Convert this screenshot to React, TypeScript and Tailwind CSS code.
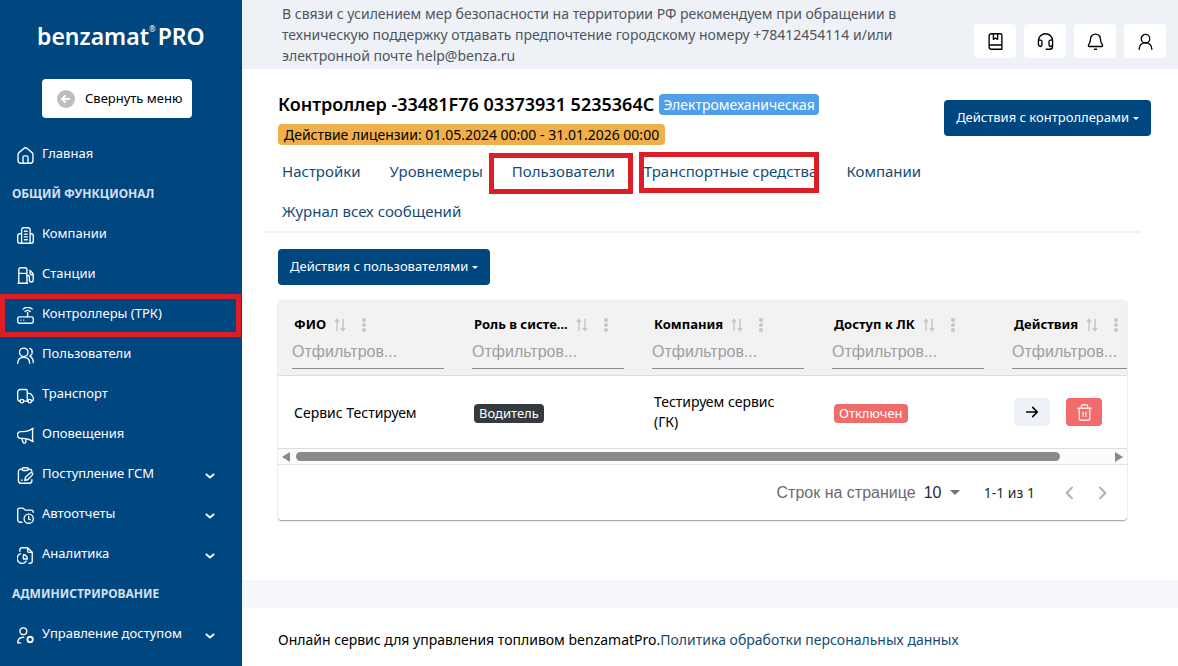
import type { ReactNode } from 'react';

// ============================================
// Icons
// ============================================

interface IconProps {
  children: ReactNode;
  className?: string;
}

function Icon({ children, className = 'size-4' }: IconProps) {
  return (
    <svg
      viewBox="0 0 24 24"
      fill="none"
      stroke="currentColor"
      strokeWidth="1.9"
      strokeLinecap="round"
      strokeLinejoin="round"
      className={`shrink-0 ${className}`}
      aria-hidden="true"
    >
      {children}
    </svg>
  );
}

const icons = {
  home: (
    <>
      <path d="M1.5 11c0-1.4.5-2.5 1.6-3.4L9.6 2c1.4-1.2 3.4-1.2 4.8 0l6.5 5.6c1.1.9 1.6 2 1.6 3.4v8.5a3.5 3.5 0 0 1-3.5 3.5H5a3.5 3.5 0 0 1-3.5-3.5z" />
      <path d="M8.5 23v-8.500a2 2 0 0 1 2-2h3a2 2 0 0 1 2 2V23" />
    </>
  ),
  company: (
    <>
      <path d="M6.5 23V4a3 3 0 0 1 3-3h6a3 3 0 0 1 3 3v19M6.5 9.5H4a3 3 0 0 0-3 3V20a3 3 0 0 0 3 3h16a3 3 0 0 0 3-3v-7.5a3 3 0 0 0-3-3h-1.5" />
      <path d="M10.5 6h4M10.5 10h4M10.5 14h4M10.5 18h4" />
    </>
  ),
  station: (
    <>
      <path d="M2.5 23V4a3 3 0 0 1 3-3H11a3 3 0 0 1 3 3v19M1.5 23H15M2.5 9H14" />
      <path d="M14 12h1.5a2 2 0 0 1 2 2v4.5a2.7 2.7 0 0 0 5.4 0V11c0-1.2-.4-2.2-1.2-3L18 4.5M22.5 11h-2a2 2 0 0 1-2-2V5" />
    </>
  ),
  controller: (
    <>
      <rect x="1" y="14" width="22" height="9" rx="2.5" />
      <path d="M15 14V7.5M5.5 18.5h.1M9.5 18.5h.1M11.5 6.500a5 5 0 0 1 7 0M8.500 3a9.500 9.500 0 0 1 13 0" />
    </>
  ),
  users: (
    <>
      <circle cx="9.5" cy="7.5" r="6" />
      <path d="M1 23c.3-5.500 3.500-8.500 8.500-8.500S17.700 17.500 18 23M18 2c2.300.8 3.500 2.800 3.500 5.300S20.300 11.800 18 13c3.300 1.500 5 4.700 5 9" />
    </>
  ),
  transport: (
    <>
      <circle cx="7" cy="20" r="2.5" />
      <circle cx="18" cy="20" r="2.5" />
      <path d="M4.500 20A3.500 3.500 0 0 1 1 16.500V7a3.500 3.500 0 0 1 3.500-3.500H12A2.500 2.500 0 0 1 14.500 6v14M9.500 20h6M14.500 9h3c1 0 1.800.4 2.400 1.200l2.300 3c.5.600.8 1.300.8 2.100V18a2 2 0 0 1-2 2h-.5" />
    </>
  ),
  alerts: (
    <path d="M22 2c-4.500 3.500-9 4.500-14 4.500H5.500a4.500 4.500 0 0 0 0 9.500H8c5 0 9.500 1 14 4.500zM22 2h1M22 20.500h1M6.500 16l2 5.500c.7 2 4 1.600 4-.5V16.500" />
  ),
  supply: (
    <>
      <path d="M7 3H5.500A3.500 3.500 0 0 0 2 6.500v13A3.500 3.500 0 0 0 5.500 23h12a3.500 3.500 0 0 0 3.500-3.500V18M16 3h1.500A3.500 3.500 0 0 1 21 6" />
      <rect x="7" y="1" width="9" height="4" rx="2" />
      <path d="m12 14.500 6.500-6a2 2 0 0 1 3 3L15 18l-4 1zM6 18.500h1.500" />
    </>
  ),
  reports: (
    <>
      <path d="M7 21.500H4.500A3.500 3.500 0 0 1 1 18V4a2.500 2.500 0 0 1 2.500-2.500h4c1 0 1.800.4 2.400 1.200l.8 1c.4.500 1 .8 1.600.8H20A3 3 0 0 1 23 7.500" />
      <circle cx="16.5" cy="16.5" r="6.5" />
      <path d="M16.500 13v4l2.500 1" />
    </>
  ),
  analytics: (
    <>
      <path d="M4 6V4a3 3 0 0 1 3-3h8l6.500 6.500V20a3 3 0 0 1-3 3H17M15 1v4.500a2 2 0 0 0 2 2h4.500" />
      <path d="M5 9.500A7 7 0 1 0 13 20M9 11v6h5.500a5.500 5.500 0 0 0-5.500-6z" />
    </>
  ),
  access: (
    <>
      <circle cx="9" cy="6" r="4.8" />
      <path d="M1 22.500c0-5 2.500-8 8.500-8M5 22.500H1" />
      <circle cx="18.5" cy="17.5" r="3.8" strokeWidth="2.6" />
    </>
  ),
  guide: (
    <>
      <path d="M3 19.500V4a3 3 0 0 1 3-3h13a2 2 0 0 1 2 2v20H6a3 3 0 0 1-3-3v-.500A2.500 2.500 0 0 1 5.500 17H21" />
      <path d="M9 1v8l3-2 3 2V1" />
    </>
  ),
  support: (
    <path d="M5 19a3 3 0 0 1-3-3v-5a10 10 0 0 1 20 0v5a3 3 0 0 1-3 3 2 2 0 0 1-2-2v-5a2 2 0 0 1 2-2h3M5 19a2 2 0 0 0 2-2v-5a2 2 0 0 0-2-2H2M22 16v3a4 4 0 0 1-4 4h-5" />
  ),
  bell: (
    <path d="M12 1.500a7 7 0 0 0-7 7c0 4-1 6-2.700 8.200-.7.900-.2 2.300 1 2.300h17.400c1.200 0 1.700-1.400 1-2.300C20 14.500 19 12.500 19 8.500a7 7 0 0 0-7-7zM10.500 23h3" />
  ),
  profile: (
    <>
      <circle cx="12" cy="8" r="6" />
      <path d="M3 23c.4-5.300 3.700-9 9-9s8.600 3.700 9 9" />
    </>
  ),
};

// ============================================
// Sidebar
// ============================================

interface NavItem {
  label: string;
  icon?: ReactNode;
  expandable?: boolean;
  marked?: boolean;
}

const navItems: NavItem[] = [
  { label: 'Главная', icon: icons.home },
  { label: 'ОБЩИЙ ФУНКЦИОНАЛ' },
  { label: 'Компании', icon: icons.company },
  { label: 'Станции', icon: icons.station },
  { label: 'Контроллеры (ТРК)', icon: icons.controller, marked: true },
  { label: 'Пользователи', icon: icons.users },
  { label: 'Транспорт', icon: icons.transport },
  { label: 'Оповещения', icon: icons.alerts },
  { label: 'Поступление ГСМ', icon: icons.supply, expandable: true },
  { label: 'Автоотчеты', icon: icons.reports, expandable: true },
  { label: 'Аналитика', icon: icons.analytics, expandable: true },
  { label: 'АДМИНИСТРИРОВАНИЕ' },
  { label: 'Управление доступом', icon: icons.access, expandable: true },
];

function Sidebar() {
  return (
    <aside className="w-[242px] shrink-0 bg-[#00467f] text-white">
      <div className="flex pt-5 pl-[37px] text-[23px] leading-8 font-semibold whitespace-nowrap">
        benzamat
        <span className="mr-0.5 text-[8px] leading-[18px] font-normal">®</span>
        PRO
      </div>
      <button
        type="button"
        className="mt-[27px] ml-[42px] flex h-[39px] w-[150px] items-center gap-2.5 rounded bg-white pl-[15px] text-[13px] whitespace-nowrap text-black"
      >
        <svg viewBox="0 0 18 18" className="size-[18px]" aria-hidden="true">
          <circle cx="9" cy="9" r="9" fill="#bdbdbd" />
          <path d="M13 9H5m3.500-3.500L5 9l3.500 3.500" fill="none" stroke="#fff" strokeWidth="1.9" />
        </svg>
        Свернуть меню
      </button>
      <nav className="mt-4">
        <ul>
          {navItems.map((item) => (
            <li key={item.label} className="relative flex h-10 items-center">
              {item.icon ? (
                <a
                  href="#"
                  className="flex flex-1 items-center gap-2 pr-[26px] pl-[17px] text-[13px] text-white"
                >
                  <Icon className="mt-0.5 size-[17px]">{item.icon}</Icon>
                  <span className="flex-1">{item.label}</span>
                  {item.expandable && (
                    <Icon className="mt-1 size-3">
                      <path d="m5 9 7 6 7-6" strokeWidth="4" />
                    </Icon>
                  )}
                </a>
              ) : (
                <h2 className="pl-3 text-[12px] font-bold text-[#d5e0ee]">{item.label}</h2>
              )}
              {item.marked && (
                <span className="pointer-events-none absolute top-0 left-0 h-[43px] w-[241px] border-[5px] border-[#dc1f26]" />
              )}
            </li>
          ))}
        </ul>
      </nav>
    </aside>
  );
}

// ============================================
// Top bar
// ============================================

const topActions = [
  { label: 'Инструкция', icon: icons.guide },
  { label: 'Поддержка', icon: icons.support },
  { label: 'Уведомления', icon: icons.bell },
  { label: 'Профиль', icon: icons.profile },
];

function TopBar() {
  return (
    <header className="flex h-[69px] items-start justify-between bg-[#eef1f6] pr-3 pl-10">
      <p className="w-[640px] pt-[3px] text-[14px] leading-[21px] text-[#4f5560]">
        В связи с усилением мер безопасности на территории РФ рекомендуем при обращении в
        техническую поддержку отдавать предпочтение городскому номеру +78412454114 и/или
        электронной почте help@benza.ru
      </p>
      <div className="flex gap-2 pt-6">
        {topActions.map((action) => (
          <button
            key={action.label}
            type="button"
            aria-label={action.label}
            className="flex h-[34px] w-[42px] items-center justify-center rounded bg-white text-black"
          >
            <Icon className="size-[17px]">{action.icon}</Icon>
          </button>
        ))}
      </div>
    </header>
  );
}

// ============================================
// Controller heading and tabs
// ============================================

function DropdownButton({ label }: { label: string }) {
  return (
    <button
      type="button"
      className="flex h-9 items-center gap-1 rounded bg-[#00467f] px-3 text-[13px] whitespace-nowrap text-white"
    >
      {label}
      <span className="border-x-[3px] border-t-[3px] border-x-transparent border-t-white" />
    </button>
  );
}

const tabs = [
  { label: 'Настройки' },
  { label: 'Уровнемеры' },
  { label: 'Пользователи', mark: '-left-[9px] top-0.5 h-[41px] w-[144px]' },
  { label: 'Транспортные средства', mark: 'left-[9px] top-px h-[41px] w-[180px]' },
  { label: 'Компании' },
  { label: 'Журнал всех сообщений' },
];

function ControllerHeader() {
  return (
    <>
      <div className="flex items-start justify-between pr-[27px] pl-9">
        <div>
          <div className="flex items-center gap-[5px]">
            <h1 className="text-[18px] leading-6 font-semibold text-black">
              Контроллер -33481F76 03373931 5235364C
            </h1>
            <span className="rounded bg-[#4f9fea] px-1 text-[14px] leading-[21px] text-white">
              Электромеханическая
            </span>
          </div>
          <div className="mt-2 flex">
            <span className="rounded bg-[#efb04c] px-1.5 text-[14px] leading-[21px] text-black">
              Действие лицензии: 01.05.2024 00:00 - 31.01.2026 00:00
            </span>
          </div>
        </div>
        <div className="mt-2">
          <DropdownButton label="Действия с контроллерами" />
        </div>
      </div>
      <nav className="mt-1.5 mr-[38px] ml-6 flex flex-wrap gap-x-px border-b-2 border-[#f2f2f4] pr-8 pl-0.5">
        {tabs.map((tab) => (
          <a
            key={tab.label}
            href="#"
            className="relative flex h-10 items-center px-3.5 text-[15px] whitespace-nowrap text-[#174b72]"
          >
            {tab.label}
            {tab.mark && (
              <span className={`pointer-events-none absolute border-[5px] border-[#dc1f26] ${tab.mark}`} />
            )}
          </a>
        ))}
      </nav>
    </>
  );
}

// ============================================
// Users table
// ============================================

const columns = ['ФИО', 'Роль в систе...', 'Компания', 'Доступ к ЛК', 'Действия'];

function ColumnHeader({ label }: { label: string }) {
  return (
    <th className="px-3.5 pt-[15px] pb-1.5 text-left align-top font-normal">
      <div className="flex h-[18px] items-center pl-0.5 text-[13px] font-bold whitespace-nowrap text-black">
        {label}
        <svg viewBox="0 0 12 14" className="ml-2 h-3.5 w-3 shrink-0" fill="none" stroke="#c6c6c6" strokeWidth="1.5" aria-hidden="true">
          <path d="M3 13V2M1 4l2-2.500L5 4M9 1v11M7 10l2 2.500L11 10" />
        </svg>
        <svg viewBox="0 0 6 16" className="ml-[15px] h-4 w-1.5 shrink-0" fill="#c6c6c6" aria-hidden="true">
          <circle cx="3" cy="3" r="2" />
          <circle cx="3" cy="8" r="2" />
          <circle cx="3" cy="13" r="2" />
        </svg>
      </div>
      <input
        type="text"
        aria-label={`Фильтр: ${label}`}
        placeholder="Отфильтров..."
        className="mt-0.5 block h-[33px] w-full border-b border-[#8c8c8c] bg-transparent font-['Liberation_Sans',sans-serif] text-[16px] text-black outline-none placeholder:text-[#a0a0a0]"
      />
    </th>
  );
}

function UsersTable() {
  return (
    <section className="mt-4 mr-[51px] ml-9 overflow-hidden rounded border-b border-[#a9a9a9] bg-white shadow-[0_0_2px_rgba(0,0,0,0.25)]">
      <div className="overflow-hidden">
        <table className="w-[900px] table-fixed border-collapse text-[14px] text-black">
          <thead className="border-b border-[#dedede] bg-[#f2f2f2]">
            <tr>
              {columns.map((column) => (
                <ColumnHeader key={column} label={column} />
              ))}
            </tr>
          </thead>
          <tbody>
            <tr className="h-[73px] border-b border-[#dedede]">
              <td className="px-4 py-0">Сервис Тестируем</td>
              <td className="px-4 py-0">
                <span className="inline-block rounded bg-[#343a40] px-[5px] text-[13px] leading-[19px] text-white">
                  Водитель
                </span>
              </td>
              <td className="px-4 py-0 leading-5">Тестируем сервис (ГК)</td>
              <td className="px-4 py-0">
                <span className="inline-block rounded bg-[#ee6c6c] px-[5px] text-[13px] leading-[19px] text-white">
                  Отключен
                </span>
              </td>
              <td className="px-4 py-0">
                <div className="flex gap-4">
                  <button
                    type="button"
                    aria-label="Открыть"
                    className="flex h-7 w-9 items-center justify-center rounded-sm bg-[#eef1f6] text-black"
                  >
                    <Icon>
                      <path d="M4 12h16M13 5l7 7-7 7" strokeWidth="2.4" />
                    </Icon>
                  </button>
                  <button
                    type="button"
                    aria-label="Удалить"
                    className="flex h-7 w-9 items-center justify-center rounded bg-[#f26c6c] text-[#ffe9e6]"
                  >
                    <Icon className="size-[17px]">
                      <path d="M2.500 6h19M4.500 6v14a3 3 0 0 0 3 3h9a3 3 0 0 0 3-3V6M7.500 6V3.500A2.500 2.500 0 0 1 10 1h4a2.500 2.500 0 0 1 2.500 2.500V6M10 11.500v6M14 11.500v6" />
                    </Icon>
                  </button>
                </div>
              </td>
            </tr>
          </tbody>
        </table>
      </div>

      {/* horizontal scrollbar */}
      <div className="flex h-4 items-center gap-1.5 border-b border-[#e4e4e4] bg-[#fcfcfc] px-1">
        <span className="border-y-[5px] border-r-8 border-y-transparent border-r-[#8a8a8a]" />
        <div className="flex-1">
          <div className="h-[9px] w-[94%] rounded-full bg-[#8a8a8a]" />
        </div>
        <span className="border-y-[5px] border-l-8 border-y-transparent border-l-[#8a8a8a]" />
      </div>

      <div className="flex h-[55px] items-center justify-end pr-[17px] text-[14px] text-[#2b2b2b]">
        <label htmlFor="page-size" className="font-['Liberation_Sans',sans-serif] text-[16px] text-[#6b6b6b]">
          Строк на странице
        </label>
        <div className="relative ml-2 flex items-center">
          <select
            id="page-size"
            defaultValue="10"
            className="w-9 appearance-none bg-transparent font-['Liberation_Sans',sans-serif] text-[16px]"
          >
            <option>10</option>
            <option>25</option>
            <option>50</option>
          </select>
          <span className="pointer-events-none absolute right-0 border-x-[5px] border-t-[5px] border-x-transparent border-t-[#707070]" />
        </div>
        <span className="ml-6">1-1 из 1</span>
        <button type="button" aria-label="Назад" className="ml-[27px] text-[#b0b0b0]">
          <Icon>
            <path d="m15 4-8 8 8 8" strokeWidth="3" />
          </Icon>
        </button>
        <button type="button" aria-label="Вперед" className="ml-4 text-[#b0b0b0]">
          <Icon>
            <path d="m9 4 8 8-8 8" strokeWidth="3" />
          </Icon>
        </button>
      </div>
    </section>
  );
}

export default function App() {
  return (
    <div className="flex h-screen overflow-hidden bg-white font-['Noto_Sans','Open_Sans',sans-serif]">
      <Sidebar />
      <div className="flex min-w-0 flex-1 flex-col">
        <TopBar />
        <main className="flex-1 pt-[23px]">
          <ControllerHeader />
          <div className="mt-4 flex pl-9">
            <DropdownButton label="Действия с пользователями" />
          </div>
          <UsersTable />
        </main>
        <div className="h-7 bg-[#f6f7fc]" />
        <footer className="flex h-[58px] items-center bg-white pt-1 pl-9 text-[14px] text-black">
          Онлайн сервис для управления топливом benzamatPro.
          <a href="#" className="text-[#174b72]">
            Политика обработки персональных данных
          </a>
        </footer>
      </div>
    </div>
  );
}
